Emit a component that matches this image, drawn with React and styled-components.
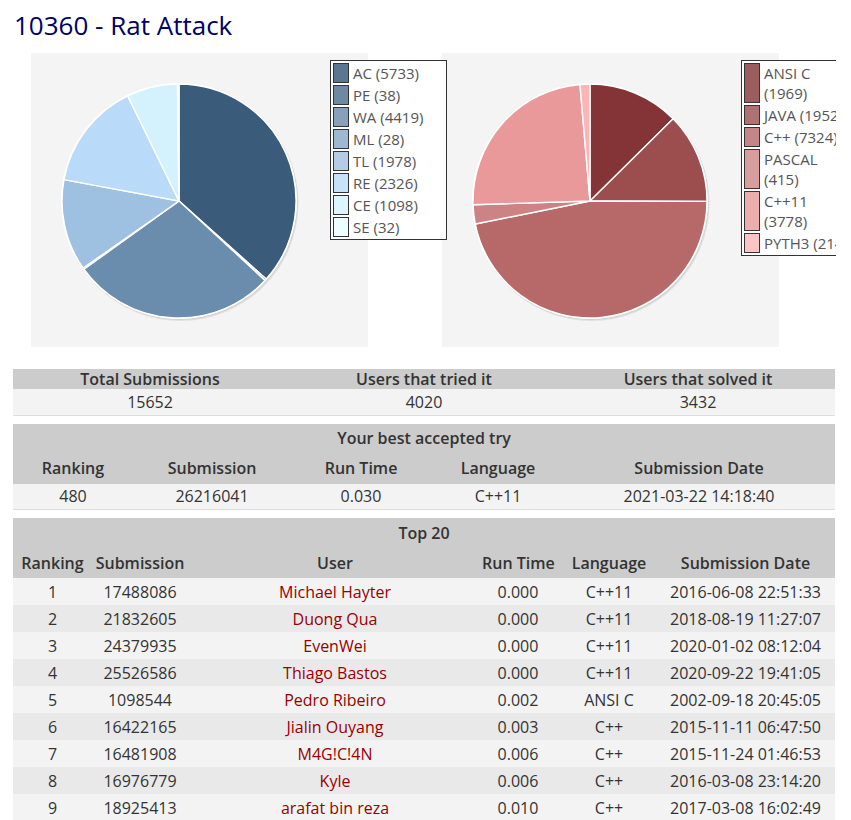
import React from "react";
import styled, { createGlobalStyle } from "styled-components";

const Global = createGlobalStyle`
  html, body { margin: 0; padding: 0; background: #fff; }
  body { font-family: "Open Sans", "Noto Sans", sans-serif; color: #333; }
`;

const Page = styled.div`
  width: 823px;
  padding: 0 15px 0 13px;
  overflow: hidden;
`;

const Title = styled.h1`
  margin: 7px 0 10px 1px;
  font-size: 26px;
  line-height: 36px;
  font-weight: 400;
  color: #000066;
`;

const ChartRow = styled.div`
  display: grid;
  grid-template-columns: 411px 412px;
  width: 823px;
  overflow: hidden;
  margin-bottom: 22px;
`;

const ChartCell = styled.div`
  padding-left: 18px;
`;

const ChartPanel = styled.div`
  position: relative;
  width: 337px;
  height: 294px;
  background: #f4f4f4;
`;

const Legend = styled.div`
  position: absolute;
  z-index: 1;
  left: 299px;
  top: 7px;
  width: 117px;
  box-sizing: border-box;
  background: #fff;
  border: 1px solid #333;
  padding: 1px 0 1px 2px;
  display: flex;
  flex-direction: column;
`;

const LegendRow = styled.div`
  display: flex;
  align-items: stretch;
  padding: 1px 0;
`;

const Swatch = styled.div`
  width: 16px;
  box-sizing: border-box;
  border: 1px solid #333;
  background: ${(p) => p.$color};
  flex: none;
`;

const LegendLabel = styled.div`
  margin-left: 4px;
  font-size: 15px;
  line-height: 20px;
  color: #555;
  white-space: nowrap;
`;

const Table = styled.table`
  width: 822px;
  border-collapse: collapse;
  table-layout: fixed;
  margin-bottom: ${(p) => p.$mb || 0}px;
  font-size: 16px;
  text-align: center;
`;

const HeadRow = styled.tr`
  background: #cccccc;
  height: ${(p) => p.$h}px;
`;

const Th = styled.th`
  padding: 0 ${(p) => p.$pr || 0}px 0 0;
  font-weight: 600;
  color: #333;
  line-height: 20px;
  white-space: nowrap;
`;

const BodyRow = styled.tr`
  height: ${(p) => p.$h}px;
  background: ${(p) => (p.$alt ? "#e9e9e9" : "#f3f3f3")};
  border-bottom: ${(p) => (p.$line ? "1px solid #dddddd" : "none")};
`;

const Td = styled.td`
  padding: 0 ${(p) => p.$pr || 0}px 0 0;
  color: #333;
  line-height: 20px;
  white-space: nowrap;
`;

const UserLink = styled.a`
  color: #990000;
  text-decoration: none;
`;

function slicePath(cx, cy, r, a0, a1) {
  const x0 = cx + r * Math.sin(a0);
  const y0 = cy - r * Math.cos(a0);
  const x1 = cx + r * Math.sin(a1);
  const y1 = cy - r * Math.cos(a1);
  const large = a1 - a0 > Math.PI ? 1 : 0;
  return `M${cx},${cy} L${x0},${y0} A${r},${r} 0 ${large} 1 ${x1},${y1} Z`;
}

function Pie({ data }) {
  const total = data.reduce((s, d) => s + d.value, 0);
  const cx = 148;
  const cy = 148;
  const r = 117;
  let acc = 0;
  return (
    <svg width="337" height="294" viewBox="0 0 337 294">
      <circle cx={cx + 1.5} cy={cy + 2} r={r + 1} fill="rgba(0,0,0,0.08)" />
      <circle cx={cx + 0.8} cy={cy + 1} r={r + 1} fill="rgba(0,0,0,0.06)" />
      <circle cx={cx} cy={cy} r={r + 1} fill="#fff" />
      {data.map((d) => {
        const a0 = (acc / total) * Math.PI * 2;
        acc += d.value;
        const a1 = (acc / total) * Math.PI * 2;
        return (
          <path
            key={d.label.join("")}
            d={slicePath(cx, cy, r, a0, a1)}
            fill={d.color}
            stroke="#fff"
            strokeWidth="1.4"
            strokeLinejoin="round"
          />
        );
      })}
    </svg>
  );
}

function Chart({ data }) {
  return (
    <ChartCell>
      <ChartPanel>
        <Pie data={data} />
        <Legend>
          {data.map((d) => (
            <LegendRow key={d.label.join("")}>
              <Swatch $color={d.swatch} />
              <LegendLabel>
                {d.label.map((l, i) => (
                  <div key={i}>{l}</div>
                ))}
              </LegendLabel>
            </LegendRow>
          ))}
        </Legend>
      </ChartPanel>
    </ChartCell>
  );
}

const verdicts = [
  { label: ["AC (5733)"], value: 5733, color: "#3b5b7b", swatch: "#5b7691" },
  { label: ["PE (38)"], value: 38, color: "#4f6f8f", swatch: "#6f89a3" },
  { label: ["WA (4419)"], value: 4419, color: "#6a8dae", swatch: "#87a1bb" },
  { label: ["ML (28)"], value: 28, color: "#83a6c6", swatch: "#9db8d1" },
  { label: ["TL (1978)"], value: 1978, color: "#9ec1e1", swatch: "#b3cde7" },
  { label: ["RE (2326)"], value: 2326, color: "#b9dbf9", swatch: "#c8e2fa" },
  { label: ["CE (1098)"], value: 1098, color: "#d3f2fe", swatch: "#dcf5fe" },
  { label: ["SE (32)"], value: 32, color: "#eafefe", swatch: "#eefefe" },
];

const languages = [
  { label: ["ANSI C", "(1969)"], value: 1969, color: "#843436", swatch: "#9b5d5e" },
  { label: ["JAVA (1952)"], value: 1952, color: "#9c4d4e", swatch: "#b07172" },
  { label: ["C++ (7324)"], value: 7324, color: "#b76868", swatch: "#c68687" },
  { label: ["PASCAL", "(415)"], value: 415, color: "#cd8383", swatch: "#d89d9d" },
  { label: ["C++11", "(3778)"], value: 3778, color: "#e99999", swatch: "#ecadad" },
  { label: ["PYTH3 (214)"], value: 214, color: "#fbb5b5", swatch: "#fcc4c4" },
];

const top = [
  ["1", "17488086", "Michael Hayter", "0.000", "C++11", "2016-06-08 22:51:33"],
  ["2", "21832605", "Duong Qua", "0.000", "C++11", "2018-08-19 11:27:07"],
  ["3", "24379935", "EvenWei", "0.000", "C++11", "2020-01-02 08:12:04"],
  ["4", "25526586", "Thiago Bastos", "0.000", "C++11", "2020-09-22 19:41:05"],
  ["5", "1098544", "Pedro Ribeiro", "0.002", "ANSI C", "2002-09-18 20:45:05"],
  ["6", "16422165", "Jialin Ouyang", "0.003", "C++", "2015-11-11 06:47:50"],
  ["7", "16481908", "M4G!C!4N", "0.006", "C++", "2015-11-24 01:46:53"],
  ["8", "16976779", "Kyle", "0.006", "C++", "2016-03-08 23:14:20"],
  ["9", "18925413", "arafat bin reza", "0.010", "C++", "2017-03-08 16:02:49"],
];

export default function App() {
  return (
    <Page>
      <Global />
      <Title>10360 - Rat Attack</Title>
      <ChartRow>
        <Chart data={verdicts} />
        <Chart data={languages} />
      </ChartRow>

      <Table $mb={8}>
        <colgroup>
          <col style={{ width: 274 }} />
          <col style={{ width: 274 }} />
          <col style={{ width: 274 }} />
        </colgroup>
        <tbody>
          <HeadRow $h={20}>
            <Th>Total Submissions</Th>
            <Th>Users that tried it</Th>
            <Th>Users that solved it</Th>
          </HeadRow>
          <BodyRow $h={26} $line>
            <Td>15652</Td>
            <Td>4020</Td>
            <Td>3432</Td>
          </BodyRow>
        </tbody>
      </Table>

      <Table $mb={8}>
        <colgroup>
          <col style={{ width: 120 }} />
          <col style={{ width: 158 }} />
          <col style={{ width: 140 }} />
          <col style={{ width: 134 }} />
          <col style={{ width: 270 }} />
        </colgroup>
        <tbody>
          <HeadRow $h={29}>
            <Th colSpan={5}>Your best accepted try</Th>
          </HeadRow>
          <HeadRow $h={31}>
            <Th>Ranking</Th>
            <Th>Submission</Th>
            <Th>Run Time</Th>
            <Th>Language</Th>
            <Th $pr={2}>Submission Date</Th>
          </HeadRow>
          <BodyRow $h={26} $line>
            <Td>480</Td>
            <Td>26216041</Td>
            <Td>0.030</Td>
            <Td>C++11</Td>
            <Td $pr={2}>2021-03-22 14:18:40</Td>
          </BodyRow>
        </tbody>
      </Table>

      <Table>
        <colgroup>
          <col style={{ width: 79 }} />
          <col style={{ width: 96 }} />
          <col style={{ width: 294 }} />
          <col style={{ width: 72 }} />
          <col style={{ width: 110 }} />
          <col style={{ width: 171 }} />
        </colgroup>
        <tbody>
          <HeadRow $h={29}>
            <Th colSpan={6}>Top 20</Th>
          </HeadRow>
          <HeadRow $h={31}>
            <Th>Ranking</Th>
            <Th>Submission</Th>
            <Th>User</Th>
            <Th>Run Time</Th>
            <Th>Language</Th>
            <Th $pr={8}>Submission Date</Th>
          </HeadRow>
          {top.map((r, i) => (
            <BodyRow key={r[0]} $h={27} $alt={i % 2 === 1}>
              <Td>{r[0]}</Td>
              <Td>{r[1]}</Td>
              <Td>
                <UserLink href="#">{r[2]}</UserLink>
              </Td>
              <Td>{r[3]}</Td>
              <Td>{r[4]}</Td>
              <Td $pr={8}>{r[5]}</Td>
            </BodyRow>
          ))}
        </tbody>
      </Table>
    </Page>
  );
}
